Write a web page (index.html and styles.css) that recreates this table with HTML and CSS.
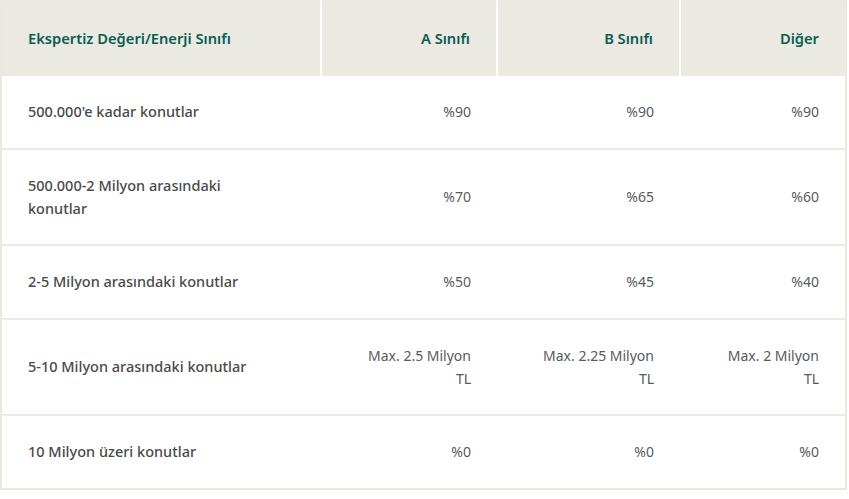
FILE: index.html
```html
<!DOCTYPE html>
<html lang="tr">
<head>
<meta charset="utf-8">
<link rel="stylesheet" href="styles.css">
</head>
<body>
<table class="rates">
  <colgroup>
    <col class="c1"><col class="c2"><col class="c3"><col class="c4">
  </colgroup>
  <thead>
    <tr>
      <th class="label">Ekspertiz Değeri/Enerji Sınıfı</th>
      <th>A Sınıfı</th>
      <th>B Sınıfı</th>
      <th>Diğer</th>
    </tr>
  </thead>
  <tbody>
    <tr>
      <td class="label">500.000'e kadar konutlar</td>
      <td>%90</td><td>%90</td><td>%90</td>
    </tr>
    <tr>
      <td class="label">500.000-2 Milyon arasındaki<br>konutlar</td>
      <td>%70</td><td>%65</td><td>%60</td>
    </tr>
    <tr>
      <td class="label">2-5 Milyon arasındaki konutlar</td>
      <td>%50</td><td>%45</td><td>%40</td>
    </tr>
    <tr>
      <td class="label">5-10 Milyon arasındaki konutlar</td>
      <td>Max. 2.5 Milyon<br>TL</td><td>Max. 2.25 Milyon<br>TL</td><td>Max. 2 Milyon<br>TL</td>
    </tr>
    <tr>
      <td class="label">10 Milyon üzeri konutlar</td>
      <td>%0</td><td>%0</td><td>%0</td>
    </tr>
  </tbody>
</table>
</body>
</html>
```
FILE: styles.css
```css
html, body {
  margin: 0;
  padding: 0;
  background: #ffffff;
}
body {
  font-family: "Noto Sans", "Open Sans", sans-serif;
  font-size: 14px;
}
.rates {
  width: 847px;
  table-layout: fixed;
  border-collapse: collapse;
  border: 2px solid #e9e8e1;
}
.c1 { width: 320px; }
.c2 { width: 176px; }
.c3 { width: 183px; }
.c4 { width: 166px; }
.rates th {
  background: #eae9e2;
  color: #0a5e50;
  font-size: 14.7px;
  font-weight: 600;
  text-align: right;
  height: 72px;
  padding: 0 26px;
  border-right: 2px solid #ffffff;
  line-height: 23px;
}
.rates th:last-child {
  border-right: 0;
}
.rates th.label,
.rates td.label {
  text-align: left;
}
.rates td {
  padding: 24px 26px 24.5px;
  line-height: 23px;
  text-align: right;
  color: #575a5e;
  font-size: 14px;
  font-weight: 400;
  border-top: 2px solid #ebeae4;
  vertical-align: middle;
}
.rates td.label {
  color: #4a4a4a;
  font-size: 14.5px;
  font-weight: 500;
}
```
